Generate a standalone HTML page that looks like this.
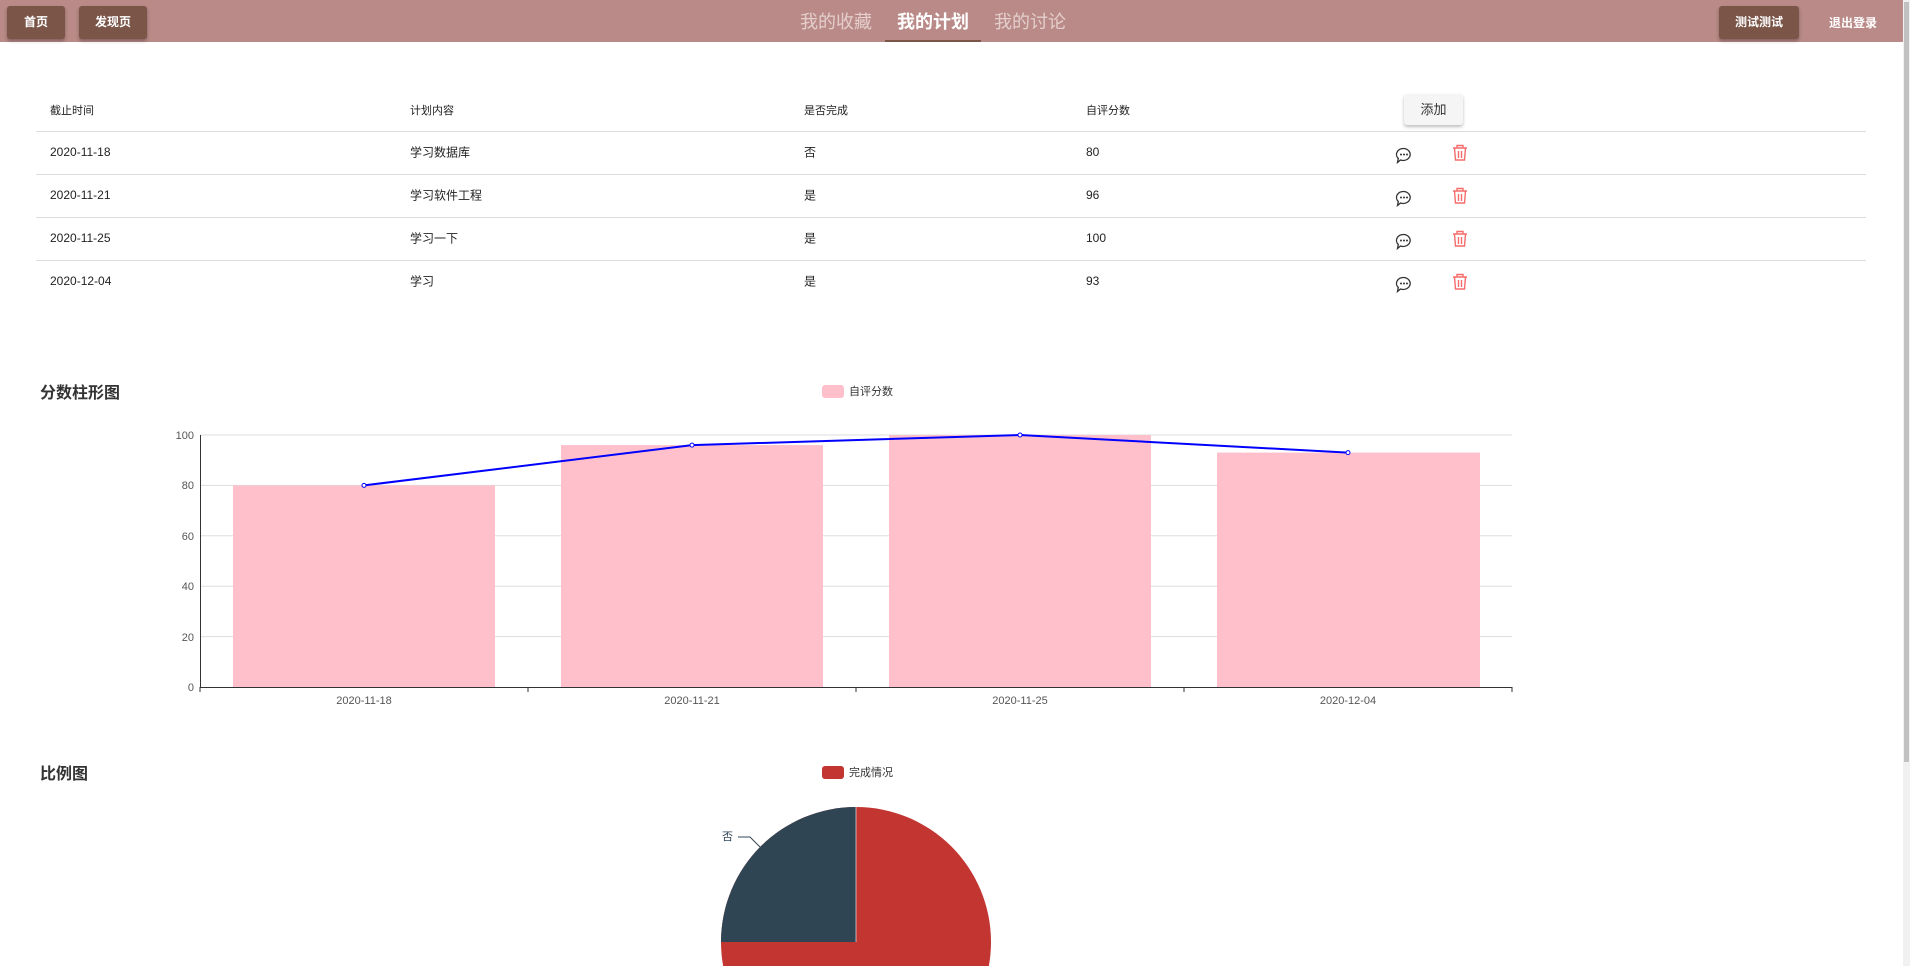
<!DOCTYPE html>
<html><head><meta charset="utf-8"><style>
*{margin:0;padding:0;box-sizing:border-box}
html,body{width:1910px;height:966px;overflow:hidden}
body{background:#fff;font-family:"Liberation Sans","Noto Sans CJK SC",sans-serif;position:relative;color:#333}
.hdr{position:absolute;left:0;top:0;width:1903px;height:42px;background:#b98a87}
.btn{position:absolute;top:6px;height:33px;background:#7a5548;color:#fff;font-size:12px;font-weight:bold;line-height:33px;text-align:center;border-radius:3px;box-shadow:0 2px 3px rgba(0,0,0,.3)}
.tab{position:absolute;top:8px;font-size:18px;color:#e4cfcd;transform:translateX(-50%)}
.abs{position:absolute}
.line{position:absolute;left:36px;width:1830px;height:1px;background:#ddd}
.c{position:absolute;font-size:12px;color:#222;transform:translateY(-50%)}
.sb{position:absolute;right:0;top:0;width:7px;height:966px;background:#f1f1f1}
.sb div{position:absolute;left:1px;top:2px;width:5px;height:760px;background:#c1c1c1}
</style></head><body>
<div class="hdr">
<div class="btn" style="left:7px;width:58px">首页</div>
<div class="btn" style="left:79px;width:68px">发现页</div>
<div class="tab" style="left:836px">我的收藏</div>
<div class="tab" style="left:933px;color:#fff;font-weight:bold">我的计划</div>
<div class="tab" style="left:1030px">我的讨论</div>
<div class="abs" style="left:885px;top:40px;width:96px;height:2px;background:#7a5548"></div>
<div class="btn" style="left:1719px;width:80px">测试测试</div>
<div class="abs" style="left:1829px;top:14px;font-size:12px;font-weight:bold;color:#fff">退出登录</div>
</div>
<div class="sb"><div></div></div>

<div class="c" style="left:50px;top:110px;font-size:11px">截止时间</div>
<div class="c" style="left:410px;top:110px;font-size:11px">计划内容</div>
<div class="c" style="left:804px;top:110px;font-size:11px">是否完成</div>
<div class="c" style="left:1086px;top:110px;font-size:11px">自评分数</div>
<div class="abs" style="left:1404px;top:94px;width:59px;height:31px;background:#f5f5f5;border-radius:3px;box-shadow:0 2px 3px rgba(0,0,0,.25);font-size:13px;line-height:31px;text-align:center;color:#333">添加</div>
<div class="line" style="top:131px"></div>
<div class="line" style="top:174px"></div>
<div class="line" style="top:217px"></div>
<div class="line" style="top:260px"></div>

<div class="c" style="left:50px;top:152px">2020-11-18</div><div class="c" style="left:410px;top:152px">学习数据库</div><div class="c" style="left:804px;top:152px">否</div><div class="c" style="left:1086px;top:152px">80</div>
<div class="c" style="left:50px;top:195px">2020-11-21</div><div class="c" style="left:410px;top:195px">学习软件工程</div><div class="c" style="left:804px;top:195px">是</div><div class="c" style="left:1086px;top:195px">96</div>
<div class="c" style="left:50px;top:238px">2020-11-25</div><div class="c" style="left:410px;top:238px">学习一下</div><div class="c" style="left:804px;top:238px">是</div><div class="c" style="left:1086px;top:238px">100</div>
<div class="c" style="left:50px;top:281px">2020-12-04</div><div class="c" style="left:410px;top:281px">学习</div><div class="c" style="left:804px;top:281px">是</div><div class="c" style="left:1086px;top:281px">93</div>

<svg class="abs" style="left:0;top:0;overflow:hidden" width="1910" height="966">
<defs>
<g id="cm"><path d="M0 -6.5a7 6 0 1 1 -3.5 11.5l-3 2.5 0.8 -4a7 6 0 0 1 5.7 -10z" fill="none" stroke="#333" stroke-width="1.3"/><circle cx="-3" cy="-0.5" r="1" fill="#333"/><circle cx="0" cy="-0.5" r="1" fill="#333"/><circle cx="3" cy="-0.5" r="1" fill="#333"/></g>
<g id="tr" fill="none" stroke="#f56c6c" stroke-width="1.4"><path d="M-7 -5h14M-3 -5v-2.5h6v2.5M-5.5 -5l1 12h9l1 -12M-1.5 -2v7M1.5 -2v7"/></g>
</defs>
<use href="#cm" x="1404" y="155"/><use href="#tr" x="1460" y="153"/>
<use href="#cm" x="1404" y="198"/><use href="#tr" x="1460" y="196"/>
<use href="#cm" x="1404" y="241"/><use href="#tr" x="1460" y="239"/>
<use href="#cm" x="1404" y="284"/><use href="#tr" x="1460" y="282"/>

<text x="40" y="398" font-size="16" font-weight="bold" fill="#333" font-family="Liberation Sans,Noto Sans CJK SC,sans-serif">分数柱形图</text>
<rect x="822" y="385" width="22" height="13" rx="3" fill="#ffc0cb"/>
<text x="849" y="395" font-size="11" fill="#333" font-family="Liberation Sans,Noto Sans CJK SC,sans-serif">自评分数</text>
<g stroke="#ddd" stroke-width="1">
<line x1="200" y1="435" x2="1512" y2="435"/><line x1="200" y1="485.4" x2="1512" y2="485.4"/><line x1="200" y1="535.8" x2="1512" y2="535.8"/><line x1="200" y1="586.2" x2="1512" y2="586.2"/><line x1="200" y1="636.6" x2="1512" y2="636.6"/>
</g>
<g fill="#ffc0cb">
<rect x="233" y="485.4" width="262" height="201.6"/>
<rect x="561" y="445.1" width="262" height="241.9"/>
<rect x="889" y="435" width="262" height="252"/>
<rect x="1217" y="452.6" width="263" height="234.4"/>
</g>
<g stroke="#333" stroke-width="1">
<line x1="200.5" y1="435" x2="200.5" y2="687"/><line x1="200" y1="687.5" x2="1512" y2="687.5"/>
<line x1="200" y1="687" x2="200" y2="692"/><line x1="528" y1="687" x2="528" y2="692"/><line x1="856" y1="687" x2="856" y2="692"/><line x1="1184" y1="687" x2="1184" y2="692"/><line x1="1512" y1="687" x2="1512" y2="692"/>
</g>
<g font-size="11" fill="#555" text-anchor="end" font-family="Liberation Sans,sans-serif">
<text x="194" y="439">100</text><text x="194" y="489">80</text><text x="194" y="540">60</text><text x="194" y="590">40</text><text x="194" y="641">20</text><text x="194" y="691">0</text>
</g>
<g font-size="11" fill="#555" text-anchor="middle" font-family="Liberation Sans,sans-serif">
<text x="364" y="704">2020-11-18</text><text x="692" y="704">2020-11-21</text><text x="1020" y="704">2020-11-25</text><text x="1348" y="704">2020-12-04</text>
</g>
<polyline points="364,485.4 692,445.1 1020,435 1348,452.6" fill="none" stroke="#0000ff" stroke-width="2"/>
<g fill="#fff" stroke="#0000ff" stroke-width="1"><circle cx="364" cy="485.4" r="2"/><circle cx="692" cy="445.1" r="2"/><circle cx="1020" cy="435" r="2"/><circle cx="1348" cy="452.6" r="2"/></g>

<text x="40" y="779" font-size="16" font-weight="bold" fill="#333" font-family="Liberation Sans,Noto Sans CJK SC,sans-serif">比例图</text>
<rect x="822" y="766" width="22" height="13" rx="3" fill="#c23531"/>
<text x="849" y="776" font-size="11" fill="#333" font-family="Liberation Sans,Noto Sans CJK SC,sans-serif">完成情况</text>
<circle cx="856" cy="942" r="135" fill="#c23531"/>
<path d="M856 942V807A135 135 0 0 0 721 942Z" fill="#2f4554"/>
<line x1="856" y1="807" x2="856" y2="942" stroke="#fff" stroke-width="0.6"/>
<polyline points="738,837 750,837 760,847" fill="none" stroke="#2f4554" stroke-width="1"/>
<text x="722" y="840" font-size="11" fill="#2f4554" font-family="Liberation Sans,Noto Sans CJK SC,sans-serif">否</text>
</svg>
</body></html>
